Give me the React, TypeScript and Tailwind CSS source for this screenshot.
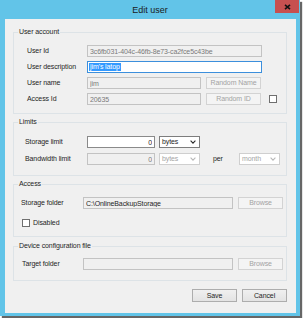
import type { ReactNode } from "react";

const labelCls = "shrink-0 leading-[8px] text-[#1e1e1e]";

const TextBox = ({
    value,
    width,
    disabled,
    align = "left",
    dark,
}: {
    value: string;
    width: string;
    disabled?: boolean;
    align?: "left" | "right";
    dark?: boolean;
}) => (
    <input
        readOnly
        value={value}
        className={`${width} h-[12px] px-[2px] py-0 border outline-none text-[7px] leading-[8px] tracking-[-0.1px]
        ${align === "right" ? "text-right" : "text-left"}
        ${disabled ? "bg-[#f0f0f0] border-[#c3c3c3]" : "bg-white border-[#8a8a8a]"}
        ${dark ? "text-[#1e1e1e]" : disabled ? "text-[#7a7a7a]" : "text-[#1e1e1e]"}`}
    />
);

const Chevron = ({ disabled }: { disabled?: boolean }) => (
    <svg width="6" height="4" viewBox="0 0 6 4" className="shrink-0">
        <path
            d="M0.6 0.7 L3 3.1 L5.4 0.7"
            fill="none"
            stroke={disabled ? "#b8b8b8" : "#2a2a2a"}
            strokeWidth="1.1"
        />
    </svg>
);

const Select = ({ value, disabled }: { value: string; disabled?: boolean }) => (
    <div
        className={`w-[41px] h-[12px] border bg-white flex items-center justify-between pl-[2px] pr-[3px]
        ${disabled ? "border-[#cfcfcf] text-[#a5a5a5]" : "border-[#7d7d7d] text-[#1e1e1e]"}`}
    >
        <span>{value}</span>
        <Chevron disabled={disabled} />
    </div>
);

const Button = ({
    children,
    width,
    disabled,
    tall,
}: {
    children: ReactNode;
    width: string;
    disabled?: boolean;
    tall?: boolean;
}) => (
    <button
        type="button"
        disabled={disabled}
        className={`${width} ${tall ? "h-[13px]" : "h-[12px]"} border flex items-center justify-center text-[7px] leading-[8px]
        ${disabled
                ? "bg-[#f4f4f4] border-[#d3d3d3] text-[#a3a3a3]"
                : "bg-gradient-to-b from-[#f0f0f0] to-[#e3e3e3] border-[#adadad] text-[#1e1e1e]"
            }`}
    >
        {children}
    </button>
);

const CheckBox = () => (
    <div className="w-[8px] h-[8px] shrink-0 border border-[#6f6f6f] bg-white" />
);

const Group = ({
    title,
    className,
    children,
}: {
    title: string;
    className: string;
    children: ReactNode;
}) => (
    <fieldset className={`ml-[8px] w-[274px] p-0 border border-[#dde3e7] ${className}`}>
        <legend className="ml-[4px] px-[1px] leading-[8px] text-[#1e1e1e]">{title}</legend>
        {children}
    </fieldset>
);

const App = () => {
    return (
        <div className="w-[304px] h-[318px] bg-white font-['Liberation_Sans',Arial,sans-serif] text-[7px] leading-[8px] tracking-[-0.1px] text-[#1e1e1e]">
            <div className="w-[300px] h-[316px] bg-[#62c4e8] flex flex-col shadow-[2px_2px_1px_rgba(0,0,0,0.6)]">
                {/* title bar */}
                <div className="relative h-[19px] shrink-0 flex items-center justify-center">
                    <span className="text-[9px] leading-[10px] tracking-normal text-[#1b1b1b]">Edit user</span>
                    <button
                        type="button"
                        className="absolute top-0 right-[1px] w-[24px] h-[13px] bg-[#c75050] flex items-center justify-center"
                    >
                        <svg width="7" height="6" viewBox="0 0 7 6">
                            <path d="M1 0.8 L6 5.2 M6 0.8 L1 5.2" stroke="#111" strokeWidth="1.6" />
                        </svg>
                    </button>
                </div>

                <div className="flex-1 ml-[5px] mr-[4px] mb-[3px] bg-[#f0f0f0] flex flex-col">
                    <Group title="User account" className="mt-[9px]">
                        <div className="pl-[13px] pt-[9px] pb-[8px] flex flex-col gap-[4px]">
                            <div className="flex items-center">
                                <span className={`${labelCls} w-[60px]`}>User Id</span>
                                <TextBox value="3c6fb031-404c-46fb-8e73-ca2fce5c43be" width="w-[175px]" disabled />
                            </div>
                            <div className="flex items-center">
                                <span className={`${labelCls} w-[60px]`}>User description</span>
                                <div className="w-[175px] h-[12px] border border-[#3c8fdc] bg-white flex items-center pl-[1px]">
                                    <span className="bg-[#3399ff] text-white h-[8px] leading-[8px] px-[1px]">jim's latop</span>
                                </div>
                            </div>
                            <div className="flex items-center">
                                <span className={`${labelCls} w-[60px]`}>User name</span>
                                <TextBox value="jim" width="w-[114px]" disabled />
                                <div className="ml-[5px]">
                                    <Button width="w-[55px]" disabled>Random Name</Button>
                                </div>
                            </div>
                            <div className="flex items-center">
                                <span className={`${labelCls} w-[60px]`}>Access Id</span>
                                <TextBox value="20635" width="w-[114px]" disabled />
                                <div className="ml-[5px]">
                                    <Button width="w-[55px]" disabled>Random ID</Button>
                                </div>
                                <div className="ml-[8px]">
                                    <CheckBox />
                                </div>
                            </div>
                        </div>
                    </Group>

                    <Group title="Limits" className="mt-[4px]">
                        <div className="pl-[11px] pt-[10px] pb-[10px] flex flex-col gap-[5px]">
                            <div className="flex items-center">
                                <span className={`${labelCls} w-[62px]`}>Storage limit</span>
                                <TextBox value="0" width="w-[68px]" align="right" />
                                <div className="ml-[4px]">
                                    <Select value="bytes" />
                                </div>
                            </div>
                            <div className="flex items-center">
                                <span className={`${labelCls} w-[62px]`}>Bandwidth limit</span>
                                <TextBox value="0" width="w-[68px]" align="right" disabled />
                                <div className="ml-[4px]">
                                    <Select value="bytes" disabled />
                                </div>
                                <span className={`${labelCls} ml-[13px] w-[26px]`}>per</span>
                                <Select value="month" disabled />
                            </div>
                        </div>
                    </Group>

                    <Group title="Access" className="mt-[4px]">
                        <div className="pl-[7px] pt-[9px] pb-[9px] flex flex-col gap-[9px]">
                            <div className="flex items-center">
                                <span className={`${labelCls} w-[62px]`}>Storage folder</span>
                                <TextBox value="C:\OnlineBackupStorage" width="w-[150px]" disabled dark />
                                <div className="ml-[5px]">
                                    <Button width="w-[45px]" disabled>Browse</Button>
                                </div>
                            </div>
                            <div className="flex items-center h-[9px] pl-[1px]">
                                <CheckBox />
                                <span className={`${labelCls} ml-[3px]`}>Disabled</span>
                            </div>
                        </div>
                    </Group>

                    <Group title="Device configuration file" className="mt-[5px]">
                        <div className="pl-[8px] pt-[8px] pb-[10px]">
                            <div className="flex items-center">
                                <span className={`${labelCls} w-[61px]`}>Target folder</span>
                                <TextBox value="" width="w-[150px]" disabled />
                                <div className="ml-[5px]">
                                    <Button width="w-[45px]" disabled>Browse</Button>
                                </div>
                            </div>
                        </div>
                    </Group>

                    <div className="mt-[8px] mr-[9px] flex justify-end gap-[5px]">
                        <Button width="w-[45px]" tall>Save</Button>
                        <Button width="w-[45px]" tall>Cancel</Button>
                    </div>
                </div>
            </div>
        </div>
    );
};

export default App;
